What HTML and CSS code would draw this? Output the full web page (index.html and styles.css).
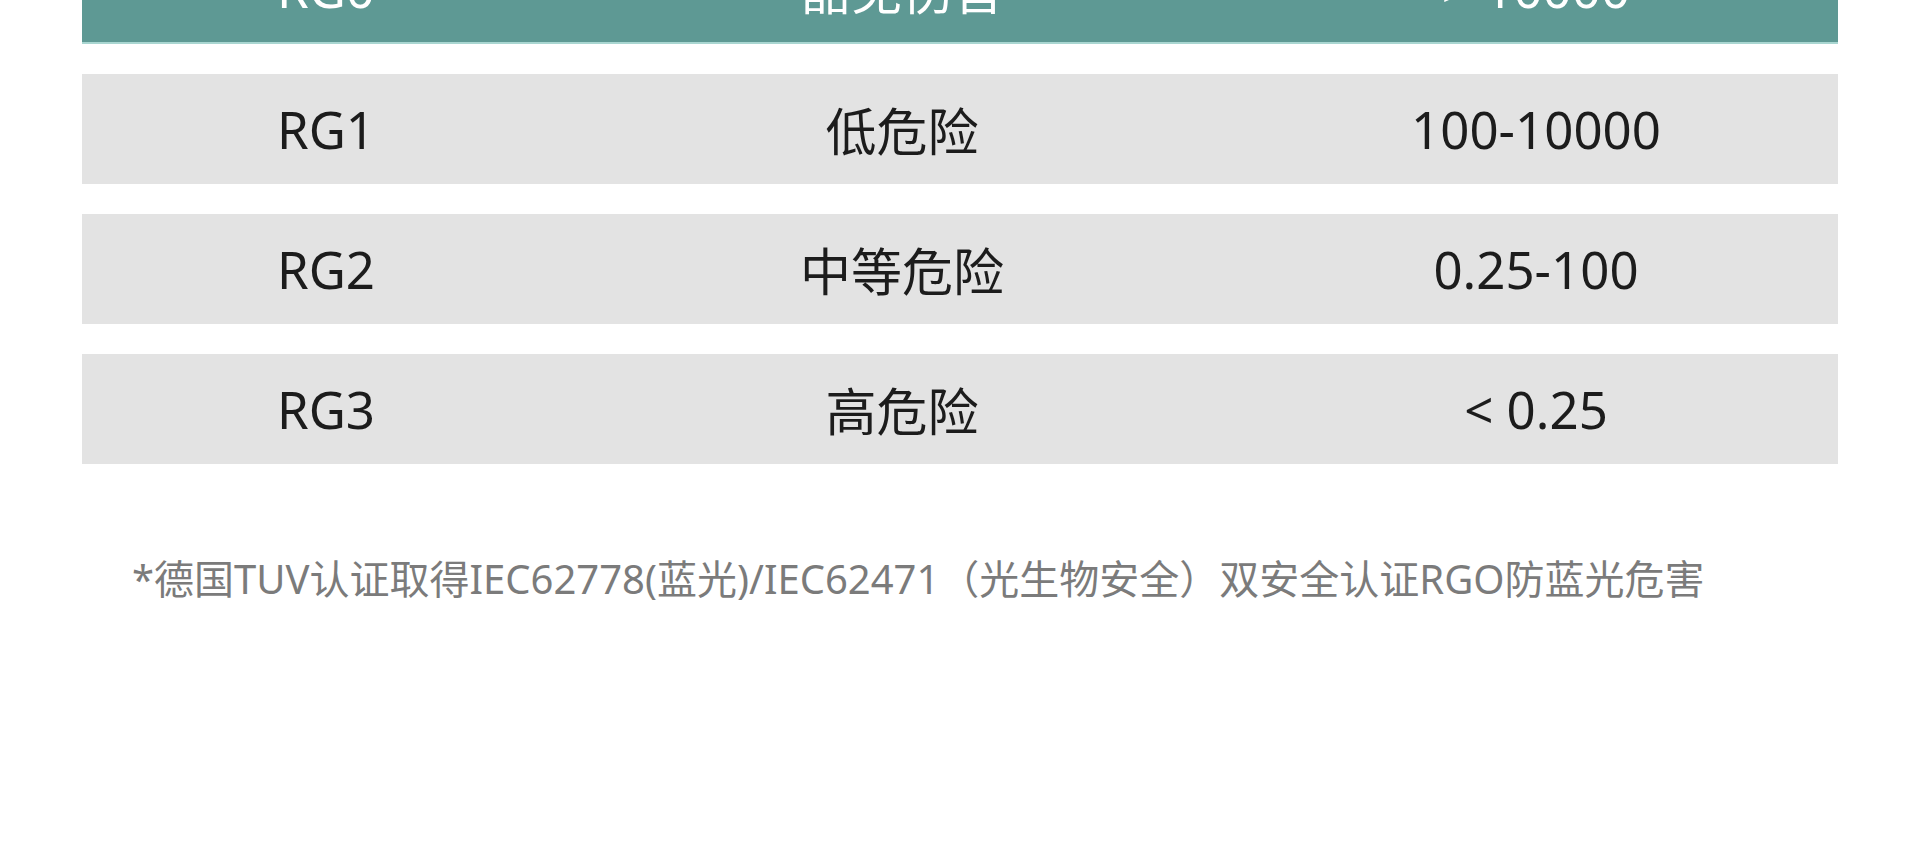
FILE: index.html
```html
<!DOCTYPE html>
<html lang="zh-CN">
  <head>
    <meta charset="UTF-8" />
    <meta name="viewport" content="width=device-width, initial-scale=1.0" />
    <title>光生物安全等级</title>
    <link rel="stylesheet" href="styles.css">
  </head>
  <body>
    <div class="container">
      <div class="rg-table">
        <div class="row row-head">
          <span>RG0</span>
          <span>豁免伤害</span>
          <span>&gt; 10000</span>
        </div>
        <div class="row">
          <span>RG1</span>
          <span>低危险</span>
          <span>100-10000</span>
        </div>
        <div class="row">
          <span>RG2</span>
          <span>中等危险</span>
          <span>0.25-100</span>
        </div>
        <div class="row">
          <span>RG3</span>
          <span>高危险</span>
          <span>&lt; 0.25</span>
        </div>
      </div>

      <p class="note">*德国TUV认证取得IEC62778(蓝光)/IEC62471（光生物安全）双安全认证RGO防蓝光危害</p>
    </div>
  </body>
</html>
```

FILE: styles.css
```css
body {
  margin: 0;
  padding: 0;
  background-color: #fff;
  font-family: "Noto Sans", "Noto Sans CJK SC", sans-serif;
  overflow: hidden;
}

.container {
  margin: -66px 82px 0;
}

.rg-table {
  display: flex;
  flex-direction: column;
  gap: 30px;
}

.row {
  display: grid;
  grid-template-columns: 488px 664px 1fr;
  align-items: center;
  height: 110px;
  background-color: #e3e3e3;
  color: #1c1c1c;
  font-size: 51px;
}

.row span {
  text-align: center;
}

.row-head {
  background-color: #5e9994;
  color: #fff;
  border-bottom: 2px solid #a9d6d1;
  box-sizing: border-box;
}

.note {
  margin: 91px 0 0;
  padding-left: 50px;
  color: #7b7b7b;
  font-size: 40px;
  line-height: 1.2;
  white-space: nowrap;
}
```
